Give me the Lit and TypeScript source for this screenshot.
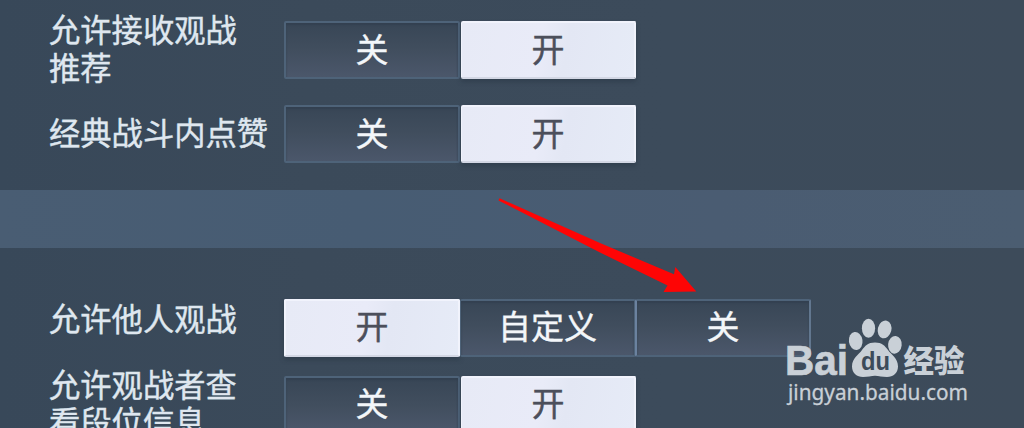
import { LitElement, html, css } from "lit";
import { customElement, property } from "lit/decorators.js";
import { classMap } from "lit/directives/class-map.js";

interface Setting {
    lines: string[];
    options: string[];
    active: number;
    raised?: boolean;
}

const GENERAL: Setting[] = [
    { lines: ["允许接收观战", "推荐"], options: ["关", "开"], active: 1 },
    { lines: ["经典战斗内点赞"], options: ["关", "开"], active: 1 },
];

const SPECTATE: Setting[] = [
    { lines: ["允许他人观战"], options: ["开", "自定义", "关"], active: 0, raised: true },
    { lines: ["允许观战者查", "看段位信息"], options: ["关", "开"], active: 1 },
];

@customElement("option-switch")
class OptionSwitch extends LitElement {
    static styles = css`
        :host {
            display: flex;
            height: 58px;
        }
        .option {
            box-sizing: border-box;
            width: 176px;
            height: 58px;
            padding-bottom: 4px;
            display: flex;
            align-items: center;
            justify-content: center;
            border: 2px solid #4e6379;
            border-radius: 2px;
            background: linear-gradient(#384656, #414e5e 50%, #4b576b);
            box-shadow: inset 0 2px 2px #334151;
            color: #f3f6f9;
            font-size: 33px;
            line-height: 1;
            white-space: nowrap;
            -webkit-text-stroke: 0.4px currentColor;
        }
        .option + .option {
            border-left-width: 1px;
        }
        .option + .option.active {
            width: 175px;
            margin-left: 1px;
        }
        .option.active + .option + .option {
            margin-left: -1px;
            border-left: 2px solid #6b829f;
            border-right-color: #62778f;
        }
        .option.active {
            border-color: #f1f3fc;
            border-bottom-color: #d3d7e4;
            background: linear-gradient(100deg, #e7eaf6, #e9ebf8 45%, #e3e7f4 60%, #e6ebf7);
            box-shadow: 0 3px 4px #2b384899;
            color: #4c4f5b;
        }
    `;

    @property({ attribute: false }) options: string[] = [];
    @property({ type: Number }) active = 0;

    render() {
        return this.options.map(
            (o, i) => html`<div class=${classMap({ option: true, active: i === this.active })}>${o}</div>`
        );
    }
}

@customElement("setting-row")
class SettingRow extends LitElement {
    static styles = css`
        :host {
            display: grid;
            grid-template-columns: 235px auto;
            grid-template-rows: 100%;
            justify-content: start;
            align-items: center;
            padding-left: 49px;
        }
        .label {
            color: #dfe7ef;
            font-size: 31.3px;
            line-height: 37.5px;
            white-space: nowrap;
            padding-bottom: 5px;
            -webkit-text-stroke: 0.4px currentColor;
        }
        .label.raised {
            padding-bottom: 19px;
        }
    `;

    @property({ attribute: false }) setting: Setting;

    render() {
        const s = this.setting;
        return html`
            <div class=${classMap({ label: true, raised: !!s.raised })}>
                ${s.lines.map((l) => html`<div>${l}</div>`)}
            </div>
            <option-switch .options=${s.options} .active=${s.active}></option-switch>
        `;
    }
}

@customElement("app-root")
class AppRoot extends LitElement {
    static styles = css`
        :host {
            position: relative;
            display: flex;
            flex-direction: column;
            width: 1024px;
            height: 428px;
            overflow: hidden;
            background: #3b4959;
            font-family: "Noto Sans CJK SC", sans-serif;
        }
        .panel {
            flex: none;
            box-sizing: border-box;
            display: grid;
            align-content: start;
            background: linear-gradient(90deg, #384859, #3b4a5a 30%, #3c4b5b 65%, #3d4b5a);
        }
        .general {
            height: 190px;
            padding-top: 8px;
            grid-auto-rows: 84px;
        }
        .spectate {
            height: 180px;
            padding-top: 41px;
            grid-auto-rows: 77px;
        }
        .band {
            flex: none;
            height: 58px;
            background: linear-gradient(90deg, #495d73, #475c73 35%, #4a5c72 70%, #4b5d71);
        }
        /* arrow and watermark lie over the panels */
        .overlay {
            position: absolute;
            inset: 0;
        }
        .arrow {
            fill: #fe0505;
        }
        .mark {
            fill: #c9d0d7;
        }
        .bai {
            font: bold 42px "Liberation Sans", sans-serif;
            stroke: #c9d0d7;
            stroke-width: 0.7px;
        }
        .du {
            fill: #3c4b5a;
            font: bold 25px "Liberation Sans", sans-serif;
        }
        .jingyan {
            font: 900 30.5px "Noto Sans CJK SC", sans-serif;
        }
        .url {
            font: 21.5px "Noto Sans", sans-serif;
            stroke: #c9d0d7;
            stroke-width: 0.3px;
        }
    `;

    render() {
        return html`
            <div class="panel general">${GENERAL.map((s) => html`<setting-row .setting=${s}></setting-row>`)}</div>
            <div class="band"></div>
            <div class="panel spectate">${SPECTATE.map((s) => html`<setting-row .setting=${s}></setting-row>`)}</div>
            <svg class="overlay" width="1024" height="428" viewBox="0 0 1024 428">
                <path class="arrow" d="M498.5 200.4 L499.5 198.2 L600 243 L674 274.3 L675.3 267 L696.3 291.5 L663.5 292 L667.5 285.5 L600 252.5 Z" />
                <g class="mark">
                    <text class="bai" x="785" y="375.3" textLength="63" lengthAdjust="spacingAndGlyphs">Bai</text>
                    <ellipse cx="855.7" cy="341" rx="6.8" ry="9" transform="rotate(-8 855.7 341)" />
                    <ellipse cx="868.5" cy="328.3" rx="6.6" ry="9.5" />
                    <ellipse cx="884.6" cy="329.4" rx="6.8" ry="9" transform="rotate(14 884.6 329.4)" />
                    <ellipse cx="894.9" cy="344.8" rx="6.8" ry="8.9" transform="rotate(6 894.9 344.8)" />
                    <path
                        d="M875 342.5 C882 342.5 885 346 888 350 C891 354.5 898 358 898 366.5 C898 373 893 377 887 377 C882 377 879 375.7 875 375.7 C871 375.7 868 377 863 377 C857 377 852 373 852 366.5 C852 358 859 354.5 862 350 C865 346 868 342.5 875 342.5 Z"
                    />
                    <text class="jingyan" x="903.5" y="372.3">经验</text>
                    <text class="url" x="788" y="399.5" textLength="180" lengthAdjust="spacingAndGlyphs">jingyan.baidu.com</text>
                </g>
                <text class="du" x="861" y="370" textLength="29" lengthAdjust="spacingAndGlyphs">du</text>
            </svg>
        `;
    }
}
